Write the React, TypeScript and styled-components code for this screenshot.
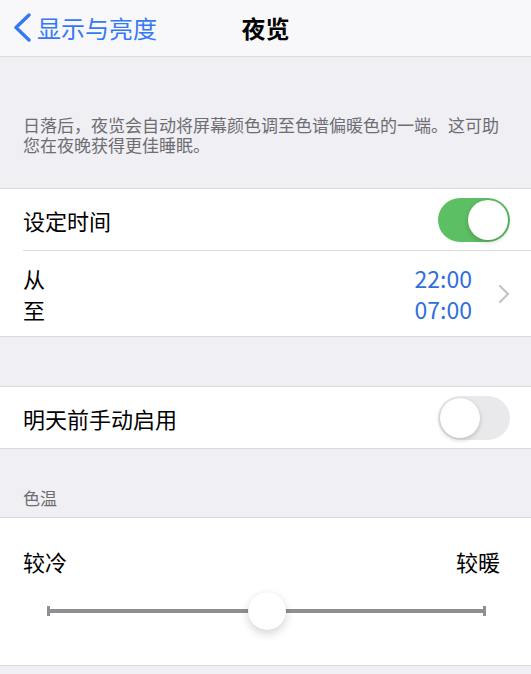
import { FC } from 'react'
import styled, { createGlobalStyle } from 'styled-components'

const GlobalStyle = createGlobalStyle`
  html, body {
    margin: 0;
    padding: 0;
    background: #efeff4;
    font-family: 'Noto Sans CJK SC', 'Noto Sans', sans-serif;
    -webkit-font-smoothing: antialiased;
  }
`

const Switch: FC<{ on?: boolean }> = ({ on }) => (
  <SwitchTrack $on={on}>
    <SwitchKnob />
  </SwitchTrack>
)

const App: FC = () => {
  const temperature = 0.5

  return (
    <>
      <GlobalStyle />
      <Page>
        <NavBar>
          <BackButton>
            <svg width="20" height="30" viewBox="0 0 20 30">
              <polyline
                points="16,2 3,14.5 16,27"
                fill="none"
                stroke="#3478f6"
                strokeWidth="3.4"
                strokeLinecap="round"
                strokeLinejoin="round"
              />
            </svg>
            <span>显示与亮度</span>
          </BackButton>
          <NavTitle>夜览</NavTitle>
          <span />
        </NavBar>

        <Description>日落后，夜览会自动将屏幕颜色调至色谱偏暖色的一端。这可助您在夜晚获得更佳睡眠。</Description>

        <Group>
          <Row>
            <Label>设定时间</Label>
            <Switch on />
          </Row>
          <Row $tall>
            <TwoLines>
              <span>从</span>
              <span>至</span>
            </TwoLines>
            <TimeCell>
              <TwoLines $blue $right>
                <span>22:00</span>
                <span>07:00</span>
              </TwoLines>
              <svg width="12" height="20" viewBox="0 0 12 20">
                <polyline
                  points="2,2 10,10 2,18"
                  fill="none"
                  stroke="#c4c4c8"
                  strokeWidth="2.2"
                  strokeLinecap="round"
                  strokeLinejoin="round"
                />
              </svg>
            </TimeCell>
          </Row>
        </Group>

        <Gap />

        <Group>
          <Row>
            <Label>明天前手动启用</Label>
            <Switch />
          </Row>
        </Group>

        <SectionHeader>色温</SectionHeader>

        <Group>
          <SliderBlock>
            <SliderLabels>
              <Label>较冷</Label>
              <Label>较暖</Label>
            </SliderLabels>
            <SliderTrack>
              <SliderCap />
              <SliderLine />
              <SliderCap />
              <SliderThumb style={{ left: `${temperature * 100}%` }} />
            </SliderTrack>
          </SliderBlock>
        </Group>
      </Page>
    </>
  )
}

const Page = styled.div`
  width: 531px;
  min-height: 674px;
  background: #efeff4;
  overflow: hidden;
`

const NavBar = styled.div`
  height: 56px;
  display: grid;
  grid-template-columns: 1fr auto 1fr;
  align-items: center;
  background: #f8f8fa;
  border-bottom: 1px solid #dcdce0;
`

const BackButton = styled.div`
  display: flex;
  align-items: center;
  gap: 4px;
  padding-left: 13px;
  color: #3478f6;
  font-size: 24px;
  line-height: 30px;

  svg {
    flex-shrink: 0;
  }
`

const NavTitle = styled.div`
  font-size: 24px;
  font-weight: 700;
  color: #000;
  line-height: 30px;
`

const Description = styled.div`
  padding: 58px 24px 33px 23px;
  font-size: 17px;
  line-height: 20px;
  color: #6d6d72;
`

const Group = styled.div`
  background: #fff;
  border-top: 1px solid #d9d9dd;
  border-bottom: 1px solid #d9d9dd;
`

const Row = styled.div<{ $tall?: boolean }>`
  height: ${(p) => (p.$tall ? 85 : 61)}px;
  margin-left: 23px;
  padding-right: 21px;
  display: flex;
  align-items: center;
  justify-content: space-between;

  & + & {
    border-top: 1px solid #dcdce0;
  }
`

const Label = styled.span`
  font-size: 22px;
  line-height: 30px;
  color: #000;
`

const TwoLines = styled.div<{ $blue?: boolean; $right?: boolean }>`
  display: flex;
  flex-direction: column;
  align-items: ${(p) => (p.$right ? 'flex-end' : 'flex-start')};
  font-size: ${(p) => (p.$blue ? 23 : 22)}px;
  line-height: 31px;
  color: ${(p) => (p.$blue ? '#2f6fdc' : '#000')};
`

const TimeCell = styled.div`
  display: flex;
  align-items: center;
  gap: 26px;
`

const SwitchTrack = styled.div<{ $on?: boolean }>`
  width: 72px;
  height: 44px;
  border-radius: 22px;
  box-sizing: border-box;
  padding: 2px;
  display: flex;
  justify-content: ${(p) => (p.$on ? 'flex-end' : 'flex-start')};
  background: ${(p) => (p.$on ? '#5cbf63' : '#e9e9eb')};
`

const SwitchKnob = styled.div`
  width: 40px;
  height: 40px;
  border-radius: 50%;
  background: #fff;
  box-shadow: 0 2px 5px rgba(0, 0, 0, 0.18), 0 0 1px rgba(0, 0, 0, 0.12);
`

const Gap = styled.div`
  height: 49px;
`

const SectionHeader = styled.div`
  height: 68px;
  box-sizing: border-box;
  padding: 0 23px 9px;
  display: flex;
  align-items: flex-end;
  font-size: 17px;
  line-height: 20px;
  color: #6d6d72;
`

const SliderBlock = styled.div`
  height: 147px;
  box-sizing: border-box;
  padding: 28px 31px 0 23px;
  display: flex;
  flex-direction: column;
`

const SliderLabels = styled.div`
  display: flex;
  justify-content: space-between;
`

const SliderTrack = styled.div`
  position: relative;
  margin: 25px 14px 0 24px;
  height: 20px;
  display: flex;
  align-items: center;
`

const SliderCap = styled.div`
  width: 3px;
  height: 10px;
  background: #8e8e93;
`

const SliderLine = styled.div`
  flex: 1;
  height: 4px;
  background: #8e8e93;
`

const SliderThumb = styled.div`
  position: absolute;
  top: 50%;
  width: 38px;
  height: 38px;
  border-radius: 50%;
  background: #fff;
  transform: translate(-50%, -50%);
  box-shadow: 0 4px 10px rgba(0, 0, 0, 0.16), 0 0 1px rgba(0, 0, 0, 0.1);
`

export default App
